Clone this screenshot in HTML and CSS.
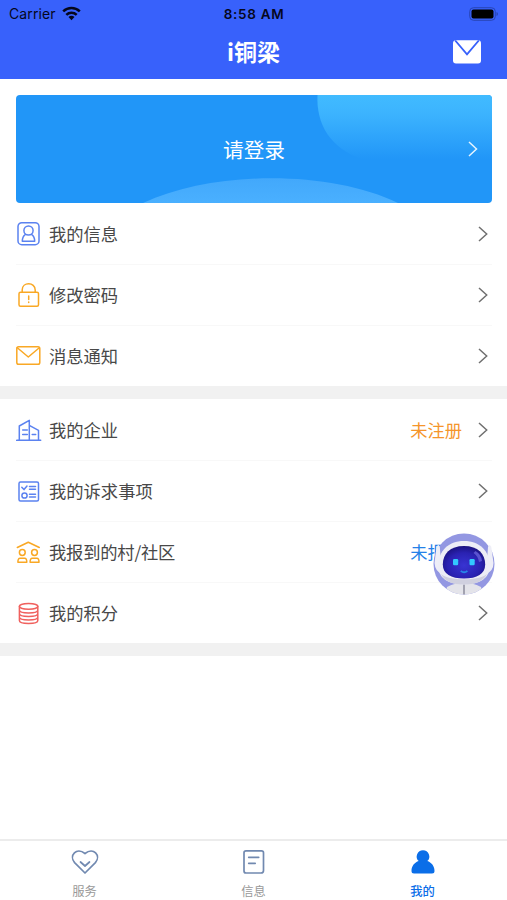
FILE: index.html
```html
<!DOCTYPE html>
<html lang="zh-CN">
<head>
<meta charset="utf-8">
<title>i铜梁</title>
<link rel="stylesheet" href="styles.css">
</head>
<body>
<div class="app">
  <header class="top">
    <div class="status">
      <div class="carrier">Carrier
        <svg width="19" height="15" viewBox="0 0 19 15" fill="none" stroke="#05071c" stroke-width="2.5"><path d="M1.2 5.4C5.9.9 13.1.9 17.8 5.4M4.3 8.8c2.9-2.8 7.5-2.8 10.4 0"/><path d="M9.5 14.2 6.5 11c1.7-1.6 4.3-1.6 6 0z" fill="#05071c" stroke="none"/></svg>
      </div>
      <div class="clock">8:58 AM</div>
      <svg class="battery" width="30" height="14" viewBox="0 0 30 14"><rect x=".7" y=".7" width="25.6" height="12.6" rx="3.8" fill="none" stroke="#2845b5"/><rect x="2.5" y="2.5" width="22" height="9" rx="2" fill="#000"/><path d="M27.5 5c2 .7 2 3.3 0 4z" fill="#2845b5"/></svg>
    </div>
    <div class="titlebar">
      <h1>i铜梁</h1>
      <svg class="mail" width="28" height="24" viewBox="0 0 28 24"><rect y=".2" width="28" height="23.4" rx="3" fill="#fff"/><path d="M2.2.5 14 14.3 25.8.5" fill="none" stroke="#3861fb" stroke-width="1.8"/></svg>
    </div>
  </header>

  <section class="login">
    <svg class="art" width="476" height="108" viewBox="0 0 476 108">
      <defs>
        <linearGradient id="sky" x1="0" y1="0" x2="0" y2="1"><stop offset="0" stop-color="#41bbff"/><stop offset=".3" stop-color="#3cb3fe"/><stop offset="1" stop-color="#2196f8"/></linearGradient>
        <linearGradient id="hill" x1="0" y1="0" x2="0" y2="1"><stop offset="0" stop-color="#42a8fb"/><stop offset="1" stop-color="#4ab0ff"/></linearGradient>
      </defs>
      <path d="M301.500 0H476V64H345C315 53 300 30 301.500 0z" fill="url(#sky)"/>
      <path d="M127 108C198 75 314 75 382 108z" fill="url(#hill)"/>
    </svg>
    <span>请登录</span>
    <svg class="go" width="10" height="16" viewBox="0 0 10 16"><path d="M1 1l7.500 7L1 15"/></svg>
  </section>

  <ul class="list">
    <li>
      <svg class="icon blue" viewBox="0 0 27 27"><rect x="2" y="1.700" width="21" height="22" rx="3.800"/><circle cx="12.500" cy="9.500" r="4.600"/><path d="M9.600 13.300C7.200 14.800 6.300 17 6.300 20.300h12.400c0-3.300-.9-5.500-3.300-7"/></svg>
      <span>我的信息</span><svg class="chev" viewBox="0 0 10 16"><path d="M1 1l7.700 7L1 15"/></svg>
    </li>
    <li>
      <svg class="icon orange" viewBox="0 0 27 27"><rect x="3" y="10.300" width="19.500" height="14" rx="1.500"/><path d="M6.200 10V8c0-8.300 13-8.300 13 0v2M12.700 14v3.500M12.700 20v.5"/></svg>
      <span>修改密码</span><svg class="chev" viewBox="0 0 10 16"><path d="M1 1l7.700 7L1 15"/></svg>
    </li>
    <li>
      <svg class="icon orange" viewBox="0 0 27 27"><rect x=".8" y="3.800" width="23" height="17.500" rx="1.800"/><path d="M1.300 4.700l11 9.300 11-9.300"/></svg>
      <span>消息通知</span><svg class="chev" viewBox="0 0 10 16"><path d="M1 1l7.700 7L1 15"/></svg>
    </li>
  </ul>

  <ul class="list second">
    <li>
      <svg class="icon blue" viewBox="0 0 27 27"><path d="M.7 23.300h24M3.300 23V9l10-5.700V23M13.300 8.300l9.200 5V23M6.700 13h4.600M6.700 17.500h4.600M16.200 17.500h3.500"/></svg>
      <span>我的企业</span><em class="warn">未注册</em><svg class="chev" viewBox="0 0 10 16"><path d="M1 1l7.700 7L1 15"/></svg>
    </li>
    <li>
      <svg class="icon blue" viewBox="0 0 27 27"><rect x="3" y="4" width="19.500" height="19" rx="1.500"/><path d="M5.800 9.300L8 11.600l3-3.500M13.500 8.500h6M13.500 11.300h6M13.500 16.200h6M13.500 19h6"/><circle cx="8.500" cy="17.500" r="2.600"/></svg>
      <span>我的诉求事项</span><svg class="chev" viewBox="0 0 10 16"><path d="M1 1l7.700 7L1 15"/></svg>
    </li>
    <li>
      <svg class="icon orange" viewBox="0 0 27 27"><path d="M1.300 8.500l11-5.300 11 5.300"/><circle cx="6.300" cy="13.500" r="2.900"/><circle cx="18.500" cy="13.500" r="2.900"/><path d="M4 19.300h4.700q2.100 0 2.100 4H1.900q0-4 2.100-4zM16.200 19.300h4.700q2.100 0 2.100 4h-8.900q0-4 2.100-4z"/></svg>
      <span class="tight">我报到的村/社区</span><em class="info">未报到</em><svg class="chev" viewBox="0 0 10 16"><path d="M1 1l7.700 7L1 15"/></svg>
      <svg class="robot" viewBox="0 0 62 62">
        <defs>
          <clipPath id="disc"><circle cx="31" cy="31" r="30.500"/></clipPath>
          <radialGradient id="visor" cx=".5" cy=".6" r=".6"><stop offset="0" stop-color="#3834d2"/><stop offset=".65" stop-color="#2a22b2"/><stop offset="1" stop-color="#1b1280"/></radialGradient>
        </defs>
        <circle cx="31" cy="31" r="30.500" fill="#9397e2"/>
        <g clip-path="url(#disc)"><path d="M14 54q17-9 34 0l2 8H12z" fill="#e4e4ea"/><path d="M31 50v12" stroke="#8c8c9c" stroke-width="1.500"/></g>
        <path d="M3.500 14q2-4 3.300 0L9 41q-7-3-7.500-11zM55 14q1.500-4 3.300 0l2.200 16q0 8-7.500 11z" fill="#eeeef7"/>
        <path d="M31 8C15 8 6 18 5 32c0 13 10 19.500 26 19.500S57 45 57 32C56 18 47 8 31 8z" fill="#ededf6"/>
        <path d="M8 41c7 7 39 7 46 0-4 8-12 10.500-23 10.500S12 49 8 41z" fill="#d0d0df"/>
        <path d="M31 13C17 13 9.800 21 9.800 31.500 9.800 41 18 45.500 31 45.500s21.200-4.500 21.200-14C52.200 21 45 13 31 13z" fill="url(#visor)"/>
        <path d="M42.500 18q6 3.500 6.500 10l-3 1q-1-6-5.500-9z" fill="#5a52d0"/>
        <rect x="20" y="26" width="5.200" height="6.200" rx="1.200" fill="#32c9ff"/><rect x="36.500" y="26" width="5.200" height="6.200" rx="1.200" fill="#32c9ff"/>
        <path d="M27.800 37.800q3.300 3 6.600 0" fill="none" stroke="#2787e8" stroke-width="1.800"/>
      </svg>
    </li>
    <li>
      <svg class="icon red" viewBox="0 0 27 27"><ellipse cx="12.600" cy="6.300" rx="9.200" ry="2.900"/><path d="M3.400 6.300v14.200c0 4 18.400 4 18.400 0V6.300M3.400 10c0 4 18.400 4 18.400 0M3.400 13.500c0 4 18.400 4 18.400 0M3.400 17c0 4 18.400 4 18.400 0"/></svg>
      <span>我的积分</span><svg class="chev" viewBox="0 0 10 16"><path d="M1 1l7.700 7L1 15"/></svg>
    </li>
  </ul>

  <nav class="tabs">
    <div class="tab"><svg viewBox="0 0 28 26"><path d="M14 24L3.600 13.600C-2.300 6.600 5.500-2.300 14 4.500c8.500-6.800 16.300 2.100 10.400 9.100z"/><path d="M9.500 13l4.500 4 4.500-4"/></svg><span>服务</span></div>
    <div class="tab"><svg viewBox="0 0 28 26"><path d="M6 1.800h15.500q2 0 2 2v17.700q0 2.500-2.500 2.500H6q-2 0-2-2V3.800q0-2 2-2zM8.700 8.300h10M8.700 14.300h6.500"/></svg><span>信息</span></div>
    <div class="tab active"><svg viewBox="0 0 28 26"><path d="M14 1.200a6.300 6.300 0 0 1 4.300 10.900c4 1.300 7.200 5 7.200 9.900q0 2.500-2.500 2.500H5Q2.500 24.500 2.500 22c0-4.900 3.200-8.600 7.200-9.900A6.300 6.300 0 0 1 14 1.200z"/></svg><span>我的</span></div>
  </nav>
</div>
</body>
</html>
```

FILE: styles.css
```css
* { box-sizing: border-box; }
body {
  margin: 0;
  background: #fff;
  font-family: "Noto Sans CJK SC", sans-serif;
  color: #484848;
}
svg { display: block; flex: none; }
.app { width: 507px; height: 900px; display: flex; flex-direction: column; overflow: hidden; }

.top { height: 79px; background: #3861fb; }
.status {
  height: 27px;
  padding: 0 8px 0 9px;
  display: grid;
  grid-template-columns: 1fr auto 1fr;
  align-items: center;
  font-family: Inter, sans-serif;
  font-size: 14px;
  color: #05071c;
}
.carrier { display: flex; align-items: center; gap: 6px; letter-spacing: .1px; }
.clock { font-weight: 600; font-size: 13.500px; letter-spacing: .7px; }
.battery { justify-self: end; }
.titlebar { height: 50px; padding: 0 26px; display: grid; grid-template-columns: 1fr auto 1fr; align-items: center; }
h1 { grid-column: 2; margin: -3px 0 0; font-size: 23px; line-height: 34px; font-weight: 700; color: #fff; }
.mail { justify-self: end; }

.login {
  position: relative;
  height: 108px;
  margin: 16px 15px 1px 16px;
  padding: 0 14px;
  border-radius: 4px;
  background: #2196f8;
  overflow: hidden;
  display: grid;
  grid-template-columns: 1fr auto 1fr;
  align-items: center;
  color: #fff;
  font-size: 20.7px;
}
.art { position: absolute; inset: 0; }
.login span { position: relative; grid-column: 2; }
.go { position: relative; justify-self: end; fill: none; stroke: #e4f4ff; stroke-width: 1.5; }

.list { list-style: none; margin: 0; padding: 0 15px 0 16px; border-bottom: 13px solid #f1f1f1; }
.list li { position: relative; height: 61px; display: flex; align-items: center; border-bottom: 1px solid #f8f8f8; }
.list li:last-child { border-bottom: 0; }
.list:first-of-type li:last-child { height: 60px; }
.second { padding-top: 1px; }
.second li:last-child { height: 60px; }
.list span { flex: 1; margin-left: 6px; font-size: 17.300px; line-height: 26px; }
.list .tight { letter-spacing: -.2px; }
.list em { font-style: normal; font-size: 17.300px; line-height: 26px; margin-right: 16px; }
.warn { color: #f5952b; }
.info { color: #2481e8; }
.icon { width: 27px; height: 27px; fill: none; stroke-width: 1.500; stroke-linejoin: round; stroke-linecap: round; }
.blue { stroke: #5b82f0; }
.orange { stroke: #f9a825; }
.red { stroke: #f0615e; }
.chev { width: 10px; height: 16px; margin-right: 4px; fill: none; stroke: #707070; stroke-width: 1.500; }
.robot { position: absolute; width: 62px; height: 62px; right: -3px; top: 11px; z-index: 2; }

.tabs { margin-top: auto; height: 61px; border-top: 2px solid #ececec; display: grid; grid-template-columns: repeat(3, 1fr); }
.tab { display: flex; flex-direction: column; align-items: center; padding-top: 8px; font-size: 12.300px; line-height: 18px; color: #999; }
.tab svg { width: 28px; height: 26px; margin-bottom: 7px; fill: none; stroke: #7189b0; stroke-width: 1.700; stroke-linecap: round; stroke-linejoin: round; }
.tab.active { color: #0b6ee8; font-weight: 500; }
.active svg { fill: #0b6ee8; stroke: none; }
```
